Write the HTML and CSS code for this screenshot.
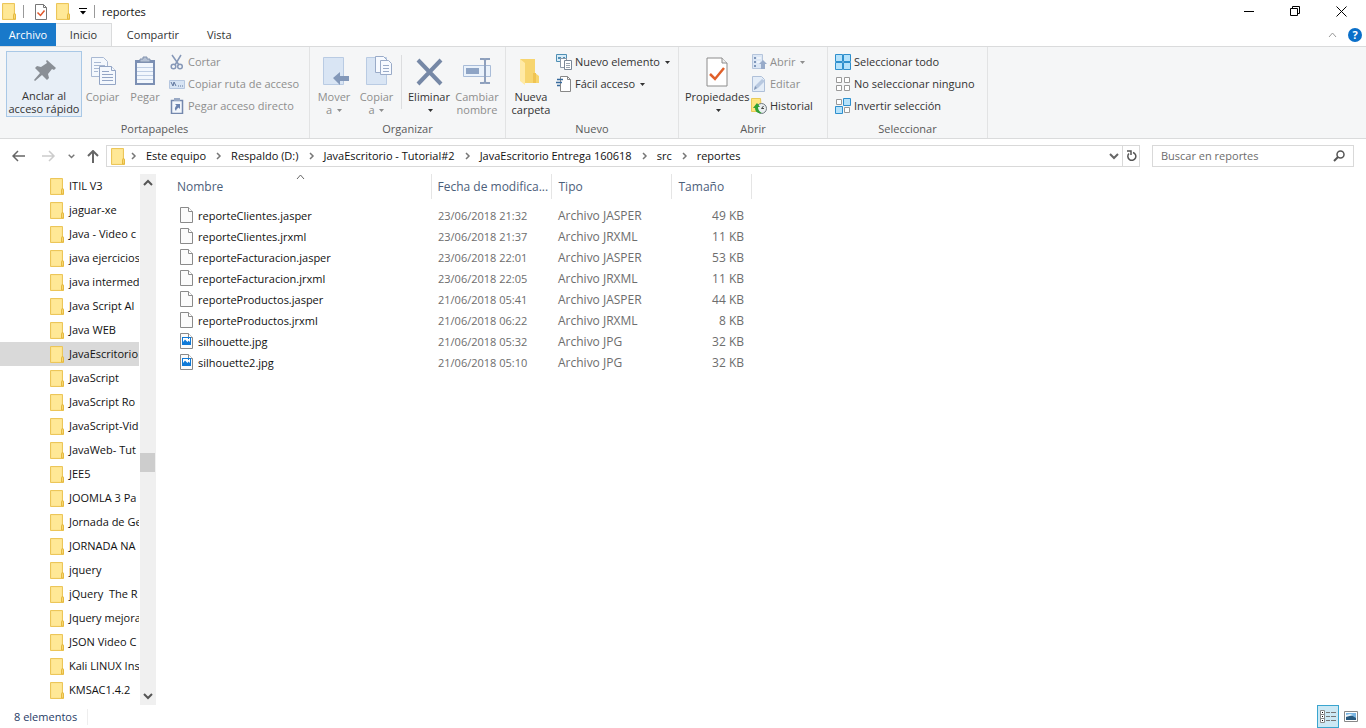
FILE: index.html
```html
<!DOCTYPE html>
<html lang="es">
<head>
<meta charset="utf-8">
<title>reportes</title>
<link rel="stylesheet" href="styles.css">
</head>
<body>
<svg class="defs" aria-hidden="true">
  <symbol id="folder" viewBox="0 0 14 17"><path d="M.5.5h12v10l1 1v5H.5z" fill="#fbe08a" stroke="#ecc659"/><path d="M1.500 1.500h10v14h-10z" fill="#ffe896"/><path d="M11.500 16v-4l1-2 1 2v4z" fill="#f7d774" stroke="#e5b93f"/></symbol>
  <symbol id="file" viewBox="0 0 13 16"><path d="M.5.5h8l4 4v11H.5z" fill="#fbfbfb" stroke="#8a8a8a"/><path d="M8.500.5v4h4" fill="#fff" stroke="#8a8a8a"/></symbol>
  <symbol id="image" viewBox="0 0 13 16"><path d="M.5.5h8l4 4v11H.5z" fill="#fbfbfb" stroke="#8a8a8a"/><path d="M8.500.5v4h4" fill="#fff" stroke="#8a8a8a"/><path d="M2 4h9v8H2z" fill="#0f7ad8"/><path d="M3 5h7v4L8.500 7.500 7.500 9 5 6.500 3 9z" fill="#fff"/><path d="M8 5h1v1H8z" fill="#0f7ad8"/></symbol>
  <symbol id="down" viewBox="0 0 5 3"><path d="M0 0h5L2.500 3z" fill="currentColor"/></symbol>
  <symbol id="chev" viewBox="0 0 6 8"><path d="M1 1l3 3-3 3" fill="none" stroke="#777" stroke-width="1.500"/></symbol>
  <symbol id="chevd" viewBox="0 0 10 7"><path d="M1 1l4 4 4-4" fill="none" stroke="currentColor" stroke-width="2"/></symbol>
  <symbol id="check" viewBox="0 0 22 30"><path d="M1 1h15l5 5v23H1z" fill="#fff" stroke="#8c8c8c"/><path d="M16 1v5h5" fill="#eee" stroke="#8c8c8c"/><path d="M4 17l5 5 9-11" fill="none" stroke="#e0602a" stroke-width="2.500"/></symbol>
</svg>

<header class="titlebar">
  <svg class="ic-folder"><use href="#folder"/></svg>
  <span class="bar"></span>
  <button class="quick" aria-label="Propiedades"><svg class="ic-check-s" viewBox="0 0 12 16"><path d="M.5.5h8l3 3v12H.5z" fill="#fff" stroke="#777"/><path d="M8.500.5v3h3" fill="none" stroke="#777"/><path d="M2.500 8.500l3 3 4-5" fill="none" stroke="#e0562a" stroke-width="1.500"/></svg></button>
  <button class="quick" aria-label="Nueva carpeta"><svg class="ic-folder"><use href="#folder"/></svg></button>
  <button class="quick quick-menu" aria-label="Personalizar"><svg width="8" height="7" viewBox="0 0 8 7"><path d="M0 0h8v1H0zM1 3h6L4 6.500z"/></svg></button>
  <span class="bar"></span>
  <h1 class="title">reportes</h1>
  <div class="window-buttons">
    <button aria-label="Minimizar"><svg width="11" height="11"><path d="M0 5.500h10" stroke="#000"/></svg></button>
    <button aria-label="Restaurar"><svg width="11" height="11" fill="none" stroke="#000"><path d="M.5 2.500h7v7h-7zM2.500 2.500v-2h7v7h-2"/></svg></button>
    <button aria-label="Cerrar"><svg width="11" height="11"><path d="M.5.5l10 10M10.500.5l-10 10" stroke="#000"/></svg></button>
  </div>
</header>

<nav class="tabs">
  <button class="tab tab-file">Archivo</button>
  <button class="tab tab-active">Inicio</button>
  <button class="tab tab-share">Compartir</button>
  <button class="tab">Vista</button>
  <div class="tab-tools">
    <button aria-label="Contraer cinta"><svg width="9" height="6"><path d="M1 5l3.500-4L8 5" fill="none" stroke="#999"/></svg></button>
    <button class="help" aria-label="Ayuda">?</button>
  </div>
</nav>

<section class="ribbon">
  <div class="group g-clip">
    <div class="tools">
      <button class="big w-pin selected"><svg viewBox="0 0 32 32"><path d="M19 5l9 8-2 2-2-1-4 5 1 4-2 2-5-5-7 6-1-1 6-7-5-5 2-2 4 1 6-4-1-2z" fill="#8a8f96"/></svg>Anclar al<br>acceso rápido</button>
      <button class="big w-copy" disabled><svg viewBox="0 0 32 32"><g fill="#f4f8fd" stroke="#a9b9d3"><path d="M4.500 1.500h12l4 4v15h-16z"/><path d="M7 6.500h7M7 9.500h11M7 12.500h11M7 15.500h4"/><path d="M12.500 10.500h12l4 4v14h-16z" stroke="#93a5c5"/><path d="M24.500 10.500v4h4M15 15.500h7M15 18.500h11M15 21.500h11M15 24.500h11" stroke="#93a5c5"/></g></svg>Copiar</button>
      <button class="big w-paste" disabled><svg viewBox="0 0 32 32"><path d="M6 4h20v25H6z" fill="#7c90b4"/><path d="M8 7h16v20H8z" fill="#f2f7fd"/><path d="M11 6V3h3V1h4v2h3v3z" fill="#b5c1d4" stroke="#8192ad"/><path d="M8 11.500h16M8 15.500h16M8 19.500h16M8 23.500h16" stroke="#bfcee4"/></svg>Pegar</button>
      <div class="smalls">
        <button class="small" disabled><svg viewBox="0 0 16 16" fill="none" stroke="#8698b8" stroke-width="1.500"><path d="M3 1l7 10M12 1L6 11"/><circle cx="4.500" cy="12.500" r="2.300"/><circle cx="11" cy="12.500" r="2.300"/></svg>Cortar</button>
        <button class="small" disabled><svg viewBox="0 0 16 16"><path d="M.5 4.500h15v8H.5z" fill="#d7e4f4" stroke="#b5c6df"/><path d="M2 6l2 4 1-4 2 4M9 10h1M11 10h1M13 10h1" fill="none" stroke="#5f769e"/></svg>Copiar ruta de acceso</button>
        <button class="small" disabled><svg viewBox="0 0 16 16"><path d="M2.500 2.500h11v13h-11z" fill="#f3f7fc" stroke="#7488ad" stroke-width="1.500"/><path d="M5 0h6v3H5z" fill="#99a9c4"/><path d="M6 6h5v5L9.500 9.500Q7 11 7 13 4.500 10.500 7.500 7.500z" fill="#6c84af"/></svg>Pegar acceso directo</button>
      </div>
    </div>
    <h2>Portapapeles</h2>
  </div>

  <div class="group g-org">
    <div class="tools">
      <button class="big w-move" disabled><svg viewBox="0 0 32 32"><path d="M5.500 1.500h20v27h-20z" fill="#d9e5f4" stroke="#b9cbe3"/><path d="M15 22l7-6v4h9v5h-9v4z" fill="#8398b9"/></svg>Mover<br>a <svg class="dd"><use href="#down"/></svg></button>
      <button class="big w-copyto" disabled><svg viewBox="0 0 32 32"><path d="M5.500 1.500h20v27h-20z" fill="#d9e5f4" stroke="#b9cbe3"/><g fill="#f7faff" stroke="#9aabc8"><path d="M14.500.5h8l4 4v12h-12z"/><path d="M19.500 4.500h8l3 3v11h-11z"/><path d="M22 9.500h6M22 12.500h6M22 15.500h6"/></g></svg>Copiar<br>a <svg class="dd"><use href="#down"/></svg></button>
      <span class="divider"></span>
      <button class="big w-del"><svg viewBox="0 0 32 32"><path d="M5 4l23 24M28 4L5 28" stroke="#7688a6" stroke-width="4"/></svg>Eliminar<br><svg class="dd"><use href="#down"/></svg></button>
      <button class="big w-ren" disabled><svg viewBox="0 0 32 32"><path d="M2.500 9.500h27v11h-27z" fill="#eaf2fb" stroke="#a9bcd8"/><path d="M5 12h13v6H5z" fill="#8ea4c5"/><path d="M19 3h4l1 1 1-1h4M24 4v22M19 27h4l1-1 1 1h4" fill="none" stroke="#8ea0bd" stroke-width="2"/></svg>Cambiar<br>nombre</button>
    </div>
    <h2>Organizar</h2>
  </div>

  <div class="group g-new">
    <div class="tools">
      <button class="big w-new"><svg viewBox="0 0 32 32"><path d="M5 3h15v14l4 3v7H9z" fill="#f7d56f"/><path d="M5 3l5 4v22l-5-4z" fill="#ffeaa5"/><path d="M18 17h3v10h-3z" fill="#f0c452"/></svg>Nueva<br>carpeta</button>
      <div class="smalls">
        <button class="small"><svg viewBox="0 0 16 16"><path d="M.5.5h10v7H.5z" fill="#d8ecf8" stroke="#4f8fb4"/><path d="M2 3h3v2H2zM7 3h2v2H7z" fill="#4f8fb4"/><path d="M4.500 4.500h6v9h-6z" fill="#fff" stroke="#8b98a8"/><path d="M8.500 6.500h7v9h-7z" fill="#fff" stroke="#7b8796"/><path d="M10 9.500h4M10 11.500h4M10 13.500h4" stroke="#9aa4b0"/></svg>Nuevo elemento<svg class="dd"><use href="#down"/></svg></button>
        <button class="small"><svg viewBox="0 0 16 16"><path d="M4.500.5h7l3 3v12h-10z" fill="#fff" stroke="#888"/><path d="M11.500.5v3h3" fill="none" stroke="#888"/><path d="M1 3.500h6M0 6.500h6M1 9.500h3" stroke="#376a9d" stroke-width="1.500"/></svg>Fácil acceso<svg class="dd"><use href="#down"/></svg></button>
      </div>
    </div>
    <h2>Nuevo</h2>
  </div>

  <div class="group g-open">
    <div class="tools">
      <button class="big w-prop"><svg viewBox="-5 -1 32 32"><use href="#check" width="22" height="30"/></svg>Propiedades<br><svg class="dd"><use href="#down"/></svg></button>
      <div class="smalls">
        <button class="small" disabled><svg viewBox="0 0 16 16"><path d="M1.500.5h10v14h-10z" fill="#dce7f5" stroke="#b5c5dc"/><path d="M3 3h2v2H3zM3 7h2v2H3zM3 11h2v2H3z" fill="#7e96ba"/><path d="M6 4h4M6 8h3" stroke="#fff"/><path d="M12 6l4 4h-2v5h-4v-5H8z" fill="#98abc9"/></svg>Abrir<svg class="dd"><use href="#down"/></svg></button>
        <button class="small" disabled><svg viewBox="0 0 16 16"><path d="M1.500.5h9l3 3v12h-12z" fill="#e4edf8" stroke="#afc0d9"/><path d="M3 14l1-4 7-7 3 2-7 7z" fill="#b7c8e0"/><path d="M3 14l1-4 2 2z" fill="#8498b8"/></svg>Editar</button>
        <button class="small"><svg viewBox="0 0 16 16"><path d="M.5.5h9l1 13H.5z" fill="#ffe680" stroke="#e9ca57"/><circle cx="10.500" cy="10.500" r="5" fill="#e9eef0" stroke="#6f7a80"/><path d="M10.500 10.500l2-2.500M10.500 10.500h2.500" fill="none" stroke="#444"/><path d="M2 10l4-5 3 4H7q0 4 4 6-7 1-7-5z" fill="#32a136"/></svg>Historial</button>
      </div>
    </div>
    <h2>Abrir</h2>
  </div>

  <div class="group g-sel">
    <div class="tools">
      <div class="smalls">
        <button class="small"><svg viewBox="0 0 16 16"><path d="M.5.5h7v7h-7zM8.500.5h7v7h-7zM.5 8.500h7v7h-7zM8.500 8.500h7v7h-7z" fill="#b5e2fb" stroke="#2e8fcd"/></svg>Seleccionar todo</button>
        <button class="small"><svg viewBox="0 0 16 16"><path d="M1.500 1.500h5v5h-5zM9.500 1.500h5v5h-5zM1.500 9.500h5v5h-5zM9.500 9.500h5v5h-5z" fill="#fff" stroke="#999"/></svg>No seleccionar ninguno</button>
        <button class="small"><svg viewBox="0 0 16 16"><path d="M1.500 1.500h5v5h-5zM9.500 9.500h5v5h-5z" fill="#fff" stroke="#999"/><path d="M8.500.5h7v7h-7zM.5 8.500h7v7h-7z" fill="#b5e2fb" stroke="#2e8fcd"/></svg>Invertir selección</button>
      </div>
    </div>
    <h2>Seleccionar</h2>
  </div>
</section>

<section class="location">
  <div class="history">
    <button aria-label="Atrás"><svg width="14" height="12"><path d="M1 6h12M6 1L1 6l5 5" fill="none" stroke="#666" stroke-width="1.500"/></svg></button>
    <button aria-label="Adelante"><svg width="14" height="12"><path d="M0 6h12M7 1l5 5-5 5" fill="none" stroke="#ccc" stroke-width="1.500"/></svg></button>
    <button class="recent" aria-label="Recientes"><svg width="7" height="5"><use href="#chevd"/></svg></button>
    <button aria-label="Subir"><svg width="12" height="13"><path d="M6 1v12M1 6l5-5 5 5" fill="none" stroke="#666" stroke-width="2"/></svg></button>
  </div>
  <nav class="address">
    <svg class="ic-folder"><use href="#folder"/></svg>
    <svg class="sep"><use href="#chev"/></svg><a href="#">Este equipo</a>
    <svg class="sep"><use href="#chev"/></svg><a href="#">Respaldo (D:)</a>
    <svg class="sep"><use href="#chev"/></svg><a href="#">JavaEscritorio - Tutorial#2</a>
    <svg class="sep"><use href="#chev"/></svg><a href="#">JavaEscritorio Entrega 160618</a>
    <svg class="sep"><use href="#chev"/></svg><a href="#">src</a>
    <svg class="sep"><use href="#chev"/></svg><a href="#">reportes</a>
    <button class="drop" aria-label="Ubicaciones anteriores"><svg width="10" height="7"><use href="#chevd"/></svg></button>
    <button class="refresh" aria-label="Actualizar"><svg width="11" height="12"><path d="M7 2.500a4 4 0 1 1-4 1" fill="none" stroke="#555" stroke-width="1.500"/><path d="M1 1h4v4" fill="none" stroke="#555" stroke-width="1.500"/></svg></button>
  </nav>
  <form class="search">
    <input type="text" aria-label="Buscar en reportes" placeholder="Buscar en reportes">
    <button type="button" aria-label="Buscar"><svg width="12" height="12" fill="none" stroke="#555"><circle cx="7.500" cy="4.500" r="3.500" stroke-width="1.500"/><path d="M5 7l-4 4" stroke-width="2"/></svg></button>
  </form>
</section>

<main class="content">
  <nav class="tree">
    <ul>
      <li><a href="#"><svg><use href="#folder"/></svg>ITIL V3</a></li>
      <li><a href="#"><svg><use href="#folder"/></svg>jaguar-xe</a></li>
      <li><a href="#"><svg><use href="#folder"/></svg>Java - Video c</a></li>
      <li><a href="#"><svg><use href="#folder"/></svg>java ejercicios</a></li>
      <li><a href="#"><svg><use href="#folder"/></svg>java intermed</a></li>
      <li><a href="#"><svg><use href="#folder"/></svg>Java Script Al</a></li>
      <li><a href="#"><svg><use href="#folder"/></svg>Java WEB</a></li>
      <li><a href="#" class="current"><svg><use href="#folder"/></svg>JavaEscritorio</a></li>
      <li><a href="#"><svg><use href="#folder"/></svg>JavaScript</a></li>
      <li><a href="#"><svg><use href="#folder"/></svg>JavaScript Ro</a></li>
      <li><a href="#"><svg><use href="#folder"/></svg>JavaScript-Vid</a></li>
      <li><a href="#"><svg><use href="#folder"/></svg>JavaWeb- Tut</a></li>
      <li><a href="#"><svg><use href="#folder"/></svg>JEE5</a></li>
      <li><a href="#"><svg><use href="#folder"/></svg>JOOMLA 3 Pa</a></li>
      <li><a href="#"><svg><use href="#folder"/></svg>Jornada de Ge</a></li>
      <li><a href="#"><svg><use href="#folder"/></svg>JORNADA NA</a></li>
      <li><a href="#"><svg><use href="#folder"/></svg>jquery</a></li>
      <li><a href="#"><svg><use href="#folder"/></svg>jQuery&nbsp; The R</a></li>
      <li><a href="#"><svg><use href="#folder"/></svg>Jquery mejora</a></li>
      <li><a href="#"><svg><use href="#folder"/></svg>JSON Video C</a></li>
      <li><a href="#"><svg><use href="#folder"/></svg>Kali LINUX Ins</a></li>
      <li><a href="#"><svg><use href="#folder"/></svg>KMSAC1.4.2</a></li>
    </ul>
  </nav>
  <div class="scrollbar">
    <button class="up" aria-label="Desplazar arriba"><svg width="10" height="7"><use href="#chevd"/></svg></button>
    <div class="track"><div class="thumb"></div></div>
    <button aria-label="Desplazar abajo"><svg width="10" height="7"><use href="#chevd"/></svg></button>
  </div>
  <div class="files">
    <table>
      <thead>
        <tr><th class="c-name">Nombre<svg class="sort" width="9" height="5"><path d="M1 5l3.500-4L8 5" fill="none" stroke="#666"/></svg></th><th class="c-date">Fecha de modifica...</th><th class="c-type">Tipo</th><th class="c-size">Tamaño</th></tr>
      </thead>
      <tbody>
        <tr><td><svg><use href="#file"/></svg>reporteClientes.jasper</td><td>23/06/2018 21:32</td><td>Archivo JASPER</td><td>49 KB</td></tr>
        <tr><td><svg><use href="#file"/></svg>reporteClientes.jrxml</td><td>23/06/2018 21:37</td><td>Archivo JRXML</td><td>11 KB</td></tr>
        <tr><td><svg><use href="#file"/></svg>reporteFacturacion.jasper</td><td>23/06/2018 22:01</td><td>Archivo JASPER</td><td>53 KB</td></tr>
        <tr><td><svg><use href="#file"/></svg>reporteFacturacion.jrxml</td><td>23/06/2018 22:05</td><td>Archivo JRXML</td><td>11 KB</td></tr>
        <tr><td><svg><use href="#file"/></svg>reporteProductos.jasper</td><td>21/06/2018 05:41</td><td>Archivo JASPER</td><td>44 KB</td></tr>
        <tr><td><svg><use href="#file"/></svg>reporteProductos.jrxml</td><td>21/06/2018 06:22</td><td>Archivo JRXML</td><td>8 KB</td></tr>
        <tr><td><svg><use href="#image"/></svg>silhouette.jpg</td><td>21/06/2018 05:32</td><td>Archivo JPG</td><td>32 KB</td></tr>
        <tr><td><svg><use href="#image"/></svg>silhouette2.jpg</td><td>21/06/2018 05:10</td><td>Archivo JPG</td><td>32 KB</td></tr>
      </tbody>
    </table>
  </div>
</main>

<footer class="status">
  <span class="count">8 elementos</span>
  <div class="views">
    <button class="on" aria-label="Detalles"><svg width="16" height="14"><path d="M.5.5h4v4h-4zM.5 4.500h4v4h-4zM.5 8.500h4v4h-4z" fill="#fff" stroke="#888"/><path d="M2 2h1v1H2zM2 6h1v1H2zM2 10h1v1H2z"/><path d="M6 2.500h4M11 2.500h5M6 6.500h4M11 6.500h5M6 10.500h4M11 10.500h5" stroke="#777"/></svg></button>
    <button aria-label="Iconos grandes"><svg width="14" height="11"><path d="M.5.5h13v10H.5z" fill="#fff" stroke="#888"/><path d="M2 2h10v7H2z" fill="#79b5e3"/><path d="M2 5q5-2 10 2v2H2z" fill="#28597e"/><path d="M2 4l4-1 3 1-7 2z" fill="#e8f3fa"/></svg></button>
  </div>
</footer>
</body>
</html>
```
FILE: styles.css
```css
* { box-sizing: border-box; }
html, body { height: 100%; }
body {
  margin: 0;
  display: flex;
  flex-direction: column;
  background: #fff;
  color: #111;
  font: 11px/16px "Open Sans", "Noto Sans", sans-serif;
  overflow: hidden;
}
button, input { font: inherit; color: inherit; }
button { border: 0; background: none; padding: 0; display: flex; align-items: center; justify-content: center; }
a { color: inherit; text-decoration: none; }
svg { flex: none; }
h1, h2 { margin: 0; font-size: 11px; font-weight: 400; }
.defs { display: none; }
.ic-folder { width: 14px; height: 17px; }

.titlebar { display: flex; align-items: center; height: 23px; padding-left: 2px; flex: none; }
.bar { width: 1px; height: 13px; background: #999; margin: 0 7px; }
.titlebar .bar:first-of-type { margin-right: 11px; }
.quick { margin-right: 9px; }
.quick-menu { margin: 0; }
.ic-check-s { width: 12px; height: 16px; }
.window-buttons { display: flex; margin-left: auto; padding-right: 2px; }
.window-buttons button { width: 46px; height: 20px; }

.tabs { display: flex; height: 23px; flex: none; }
.tab { padding: 0 13px; color: #333; }
.tab-file { width: 56px; padding: 0; background: #1979ca; color: #fff; }
.tab-active { width: 56px; padding: 0; background: #f5f6f7; border: 1px solid #dadbdc; border-width: 1px 1px 0 0; }
.tab-share { width: 82px; padding: 0; }
.tab-tools { display: flex; align-items: center; gap: 11px; margin-left: auto; padding-right: 4px; }
.help { width: 14px; height: 14px; border-radius: 50%; background: #0a6fc9; color: #fff; font-weight: 700; }

.ribbon { display: flex; flex: none; background: #f5f6f7; border: solid #dadbdc; border-width: 1px 0; color: #333; }
.group { display: flex; flex-direction: column; padding-top: 4px; border-right: 1px solid #e2e3e4; }
.group h2 { text-align: center; line-height: 20px; padding: 2px 0 0; color: #5a5a5a; margin-bottom: -1px; }
.g-clip { width: 310px; }
.g-org { width: 196px; }
.g-new { width: 173px; }
.g-open { width: 149px; }
.g-sel { width: 160px; }
.tools { display: flex; height: 66px; padding-left: 2px; }
.g-clip .tools, .g-open .tools, .g-sel .tools { padding-left: 6px; }
.big { display: block; text-align: center; height: 66px; line-height: 13px; padding-top: 3px; white-space: nowrap; }
.big > svg:first-child { display: block; width: 32px; height: 32px; margin: 0 auto 2px; }
.w-copy, .w-paste { padding-bottom: 13px; }
.selected { background: #e8eff7; border: 1px solid #a9c8e6; padding-top: 2px; }
button:disabled { color: #8e8e8e; }
svg.dd { width: 5px; height: 3px; margin-left: 2px; vertical-align: middle; }
.w-pin { width: 76px; }
.w-copy { width: 41px; }
.w-paste { width: 44px; }
.w-move { width: 44px; }
.w-copyto { width: 41px; }
.w-del { width: 50px; }
.w-ren { width: 46px; }
.w-new { width: 46px; }
.w-prop { width: 64px; }
.divider { width: 1px; margin: 4px 2px 8px 4px; background: #dcdddf; }
.smalls { padding-left: 2px; }
.g-sel .smalls { padding-left: 1px; }
.small { height: 22px; gap: 3px; white-space: nowrap; }
.small > svg:first-child { width: 16px; height: 16px; }

.location { display: flex; height: 35px; flex: none; padding: 6px 12px 0 0; color: #222; }
.history { display: flex; width: 106px; height: 22px; padding-left: 12px; gap: 16px; align-items: center; flex: none; }
.history .recent { margin: 0 -4px 0 -4px; color: #777; }
.address { display: flex; align-items: center; flex: 1; height: 22px; border: 1px solid #d9d9d9; padding-left: 4px; color: #111; white-space: nowrap; }
.address .sep { width: 6px; height: 8px; margin: 0 9px 0 10px; }
.address .ic-folder + .sep { margin-left: 6px; }
.drop { width: 16px; margin-left: auto; color: #666; }
.refresh { width: 17px; height: 20px; border-left: 1px solid #d9d9d9; }
.search { display: flex; width: 202px; height: 22px; margin: 0 0 0 12px; border: 1px solid #d9d9d9; flex: none; }
.search input { flex: 1; min-width: 0; border: 0; padding: 0 8px; background: none; outline: 0; }
.search input::placeholder { color: #6d6d6d; opacity: 1; }
.search button { width: 28px; }

.content { display: flex; flex: 1; min-height: 0; }
.tree { width: 140px; overflow: hidden; flex: none; }
.tree ul { list-style: none; margin: 0; padding: 0; }
.tree a { display: flex; align-items: center; gap: 5px; height: 24px; padding-left: 50px; width: 139px; overflow: hidden; white-space: nowrap; }
.tree svg { width: 14px; height: 17px; }
.tree .current { background: #d9d9d9; }
.scrollbar { display: flex; flex-direction: column; width: 16px; background: #f0f0f0; color: #555; flex: none; }
.scrollbar button { height: 17px; }
.up svg { transform: rotate(180deg); }
.track { flex: 1; padding-top: 262px; }
.thumb { height: 19px; width: 15px; background: #cdcdcd; }
.files { flex: 1; padding-left: 10px; }
table { border-collapse: collapse; table-layout: fixed; width: 585px; }
th, td { padding: 0 0 0 7px; font-weight: 400; text-align: left; white-space: nowrap; }
th { height: 25px; color: #4c607a; border-right: 1px solid #e5e5e5; position: relative; font-size: 12px; }
.c-name { width: 265px; padding-left: 11px; }
.c-date, .c-type { width: 120px; }
.c-date { padding-left: 6px; }
.c-size { width: 80px; }
.sort { position: absolute; left: 49%; top: 0; }
tbody::before { content: ""; display: block; height: 6px; }
td { height: 21px; color: #6d6d6d; }
td:first-child { color: #111; padding-left: 14px; }
td:nth-child(n+3) { font-size: 12px; }
td:last-child { text-align: right; padding-right: 7px; }
td svg { width: 13px; height: 16px; margin-right: 5px; vertical-align: text-bottom; }

.status { display: flex; align-items: center; height: 23px; flex: none; padding-left: 14px; color: #1f3b66; }
.count { padding-right: 10px; border-right: 1px solid #eee; }
.views { display: flex; margin-left: auto; padding-right: 8px; gap: 5px; }
.views .on { width: 22px; height: 23px; background: #cce8f4; border: 1px solid #3aa5cf; }
```
